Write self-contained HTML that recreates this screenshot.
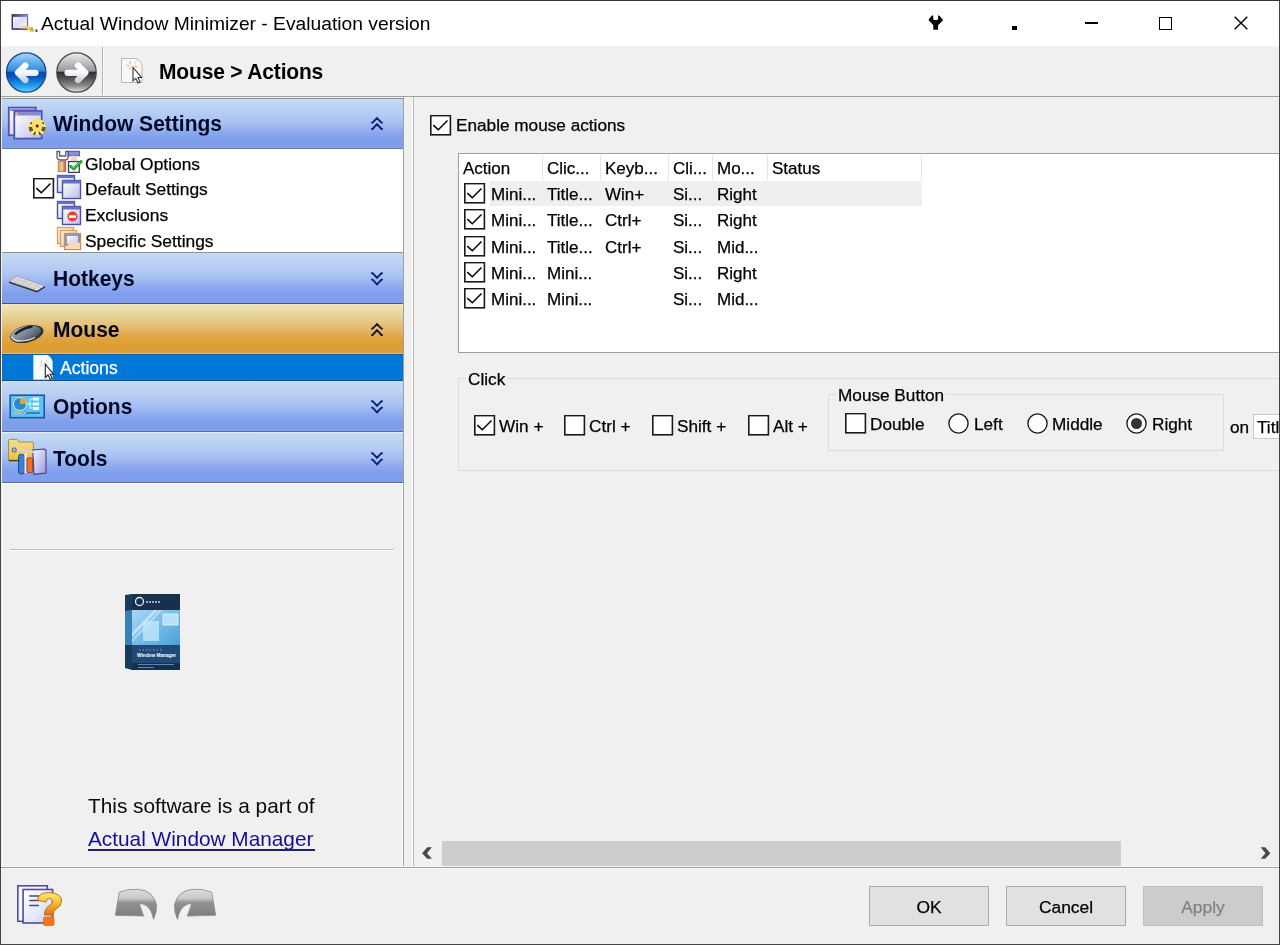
<!DOCTYPE html>
<html><head><meta charset="utf-8">
<style>
*{margin:0;padding:0;box-sizing:border-box}
html,body{width:1280px;height:945px;overflow:hidden;background:#f0f0f0}
body{position:relative;font-family:"Liberation Sans",sans-serif;color:#000;-webkit-font-smoothing:antialiased}
.t,.ht,.btn{will-change:transform}
.lv,.lb,.it,.btn{-webkit-text-stroke:0.25px currentColor}
.a{position:absolute}
.t{position:absolute;white-space:nowrap;line-height:1}

.hdr{position:absolute;left:2px;width:401px;background:linear-gradient(#c6dcf2 0%,#b6cef4 28%,#a8c0f2 48%,#8ca8ee 68%,#7e9eec 82%,#7e9eee 100%)}
.hdr.or{background:linear-gradient(#efe8c0 0%,#e8d49c 22%,#e6c07a 42%,#e0a848 66%,#dc9c30 86%,#dca040 100%)}
.ht{position:absolute;left:52.5px;font-size:21px;transform:scaleY(1.08);transform-origin:0 17.8px;font-weight:bold;color:#000a28;white-space:nowrap;line-height:1}
.chev{position:absolute;left:370px;width:14px;height:14px}
.it{font-size:17.4px}

.cb{position:absolute;width:20px;height:20px;border:1.6px solid #333;background:#fff}
.cb.chk::after{content:"";position:absolute;left:3px;top:3px;width:11px;height:6px;border-left:1.6px solid #222;border-bottom:1.6px solid #222;transform:translate(0px,1.5px) rotate(-45deg) scaleX(1.15);transform-origin:center}
.rb{position:absolute;width:21px;height:21px;border:1.6px solid #333;border-radius:50%;background:#fff}
.rb.on::after{content:"";position:absolute;left:3.4px;top:3.4px;width:11px;height:11px;border-radius:50%;background:#333}
.lb{font-size:17.2px}
.lv{font-size:17px}
.btn{position:absolute;top:886px;width:120px;height:40px;background:#e1e1e1;border:1px solid #adadad;font-size:17.4px;text-align:center;line-height:40px}
.btn.dis{background:#cccccc;border-color:#bfbfbf;color:#838383}
</style></head><body>

<!-- window border -->


<!-- title bar -->
<div class="a" style="left:1px;top:1px;width:1278px;height:45px;background:#fff"></div>
<div class="t" style="left:40.5px;top:14.1px;font-size:19.25px;color:#000">Actual Window Minimizer - Evaluation version</div>


<!-- title bar icons -->
<svg class="a" style="left:924px;top:10px" width="24" height="24" viewBox="0 0 24 24"><path d="M8.3 5.3 Q6.5 7.2 4.6 9.6 Q4.6 10.6 5.6 11.3 L8.8 14.4 L9.3 15.2 L9.3 19.7 L14.1 19.7 L14.1 15.2 L15 14.2 L18.1 11.2 Q19 10.4 18.9 9.7 Q17 7.3 14.8 5.3 L14.1 5.8 L14.1 9.6 Q11.7 10.6 9.2 9.6 L9.2 5.8 Z" fill="#000"/></svg>
<div class="a" style="left:1012px;top:26px;width:5px;height:4px;background:#000"></div>
<div class="a" style="left:1085px;top:22px;width:13px;height:1.6px;background:#000"></div>
<div class="a" style="left:1159px;top:17px;width:13px;height:12.5px;border:1.5px solid #000"></div>
<svg class="a" style="left:1234px;top:15.8px" width="14" height="14" viewBox="0 0 14 14"><path d="M0.7 0.7 L13.3 13.3 M13.3 0.7 L0.7 13.3" stroke="#000" stroke-width="1.4"/></svg>
<!-- app icon -->
<svg class="a" style="left:11px;top:13px" width="28" height="20" viewBox="0 0 28 20">
<defs><linearGradient id="wg" x1="0" y1="0" x2="1" y2="1"><stop offset="0" stop-color="#ffffff"/><stop offset="0.45" stop-color="#dcdcf8"/><stop offset="1" stop-color="#f4f4ff"/></linearGradient>
<linearGradient id="ag" x1="0" y1="0" x2="1" y2="0"><stop offset="0" stop-color="#fae890"/><stop offset="0.6" stop-color="#f0cc50"/><stop offset="1" stop-color="#c89010"/></linearGradient>
<linearGradient id="tg" x1="0" y1="0" x2="1" y2="0"><stop offset="0" stop-color="#3a3a80"/><stop offset="1" stop-color="#9090c0"/></linearGradient></defs>
<rect x="1.4" y="1.5" width="15.2" height="14.4" fill="url(#wg)" stroke="#5a5a90" stroke-width="1"/>
<path d="M1.2 1.2 L1.2 16.2 L16.8 16.2" fill="none" stroke="#30306a" stroke-width="1.2"/>
<rect x="1.5" y="1.5" width="15" height="2.4" fill="url(#tg)"/>
<path d="M9 13.8 Q15 11.2 20 14.8 L21.2 13.6 L23 18.5 L18 18.5 L19.2 17.2 Q14.5 14.6 9.5 15.6 Z" fill="url(#ag)"/>
<rect x="24.4" y="16.4" width="2" height="2.6" fill="#4a4a60"/>
</svg>
<!-- toolbar -->

<!-- nav buttons -->
<svg class="a" style="left:5px;top:51px" width="44" height="44" viewBox="0 0 44 44">
<defs>
<linearGradient id="bb" x1="0" y1="0" x2="0" y2="1"><stop offset="0" stop-color="#a8d8fa"/><stop offset="0.2" stop-color="#70b4f0"/><stop offset="0.46" stop-color="#3488e0"/><stop offset="0.5" stop-color="#0848a8"/><stop offset="0.62" stop-color="#0a58c0"/><stop offset="0.85" stop-color="#22a0f0"/><stop offset="1" stop-color="#60dcff"/></linearGradient>
<linearGradient id="gb" x1="0" y1="0" x2="0" y2="1"><stop offset="0" stop-color="#f0f0f0"/><stop offset="0.2" stop-color="#c8c8c8"/><stop offset="0.46" stop-color="#9a9a9a"/><stop offset="0.5" stop-color="#303030"/><stop offset="0.62" stop-color="#4a4a4a"/><stop offset="0.85" stop-color="#909090"/><stop offset="1" stop-color="#e8e8e8"/></linearGradient>
<linearGradient id="aw" x1="0" y1="0" x2="0" y2="1"><stop offset="0" stop-color="#ffffff"/><stop offset="0.5" stop-color="#f4f8fc"/><stop offset="1" stop-color="#c8d4e0"/></linearGradient>
</defs>
<circle cx="21.2" cy="21.5" r="19.7" fill="url(#bb)" stroke="#1a4888" stroke-width="1.3"/>
<path d="M30.5 21.8 L14 21.8 M20.3 14.6 L13 21.8 L20.3 29" fill="none" stroke="url(#aw)" stroke-width="6.3" stroke-linecap="round" stroke-linejoin="round"/>
</svg>
<svg class="a" style="left:55px;top:51px" width="44" height="44" viewBox="0 0 44 44">
<circle cx="21.5" cy="21.5" r="19.7" fill="url(#gb)" stroke="#4a4a4a" stroke-width="1.3"/>
<path d="M12.6 21.8 L29.5 21.8 M23 14.6 L30.3 21.8 L23 29" fill="none" stroke="url(#aw)" stroke-width="6.3" stroke-linecap="round" stroke-linejoin="round"/>
</svg>
<!-- breadcrumb doc icon -->
<svg class="a" style="left:120px;top:57px" width="26" height="28" viewBox="0 0 26 28">
<path d="M1.5 1.5 L16 1.5 Q22 4 22 9.5 L22 25.5 L1.5 25.5 Z" fill="#f8f8f8" stroke="#b0b0b0" stroke-width="0.9"/>
<path d="M10 4 L10 7.5 M11.5 10.5 L8.5 12 M14.5 6 L16.5 4.2 M14 9 L17.5 10 M6.5 8 L9.5 9" stroke="#f0a070" stroke-width="0.9"/>
<path d="M13 10.5 L13 23.8 L15.8 21.3 L18 26 L20 25 L18 20.5 L21.5 20.5 Z" fill="#fff" stroke="#333" stroke-width="1.1"/>
</svg>
<div class="a" style="left:1px;top:96px;width:1278px;height:1px;background:#a0a0a0"></div>
<div class="a" style="left:102px;top:47px;width:1px;height:48px;background:#b4b4b4"></div><div class="a" style="left:103px;top:47px;width:1px;height:48px;background:#fafafa"></div>
<div class="t" style="left:159px;top:61.1px;font-size:21px;font-weight:bold;letter-spacing:-0.17px;transform:scaleY(1.07);transform-origin:0 17.8px">Mouse &gt; Actions</div>


<!-- LEFT PANEL -->
<div class="a" style="left:1px;top:97px;width:403px;height:770px;background:#f0f0f0"></div>
<div class="a" style="left:402px;top:97px;width:1px;height:770px;background:#fff"></div>
<div class="a" style="left:403px;top:97px;width:1px;height:770px;background:#a0a0a0"></div>

<!-- headers -->

<div class="hdr" style="top:98px;height:51px;box-shadow:inset 0 1px 0 #8a929c,inset 0 -1px 0 #6c7aa8"></div>
<div class="ht" style="top:113.3px">Window Settings</div><svg class="chev" style="top:116px" viewBox="0 0 14 14"><path d="M1.2 6.6 L2.6 6.6 L7 2 L11.4 6.6 L12.8 6.6 M1.2 13 L2.6 13 L7 8.2 L11.4 13 L12.8 13" fill="none" stroke="#0a1e78" stroke-width="1.85" stroke-linejoin="miter"/></svg>
<div class="hdr" style="top:252px;height:52px;box-shadow:inset 0 1px 0 #8a929c,inset 0 -1px 0 #4a5470"></div>
<div class="ht" style="top:267.5px">Hotkeys</div><svg class="chev" style="top:272px" viewBox="0 0 14 14"><path d="M1.2 1.2 L2.6 1.2 L7 5.8 L11.4 1.2 L12.8 1.2 M1.2 7.6 L2.6 7.6 L7 12.4 L11.4 7.6 L12.8 7.6" fill="none" stroke="#0a1e78" stroke-width="1.85" stroke-linejoin="miter"/></svg>
<div class="hdr or" style="top:304px;height:49px"></div>
<div class="a" style="left:2px;top:353px;width:401px;height:1px;background:#c8c0a0"></div>
<div class="ht" style="top:319px">Mouse</div><svg class="chev" style="top:322px" viewBox="0 0 14 14"><path d="M1.2 6.6 L2.6 6.6 L7 2 L11.4 6.6 L12.8 6.6 M1.2 13 L2.6 13 L7 8.2 L11.4 13 L12.8 13" fill="none" stroke="#101838" stroke-width="1.85" stroke-linejoin="miter"/></svg>
<div class="hdr" style="top:381px;height:51px;box-shadow:inset 0 -1px 0 #5c6a98"></div>
<div class="ht" style="top:396.3px">Options</div><svg class="chev" style="top:400px" viewBox="0 0 14 14"><path d="M1.2 1.2 L2.6 1.2 L7 5.8 L11.4 1.2 L12.8 1.2 M1.2 7.6 L2.6 7.6 L7 12.4 L11.4 7.6 L12.8 7.6" fill="none" stroke="#0a1e78" stroke-width="1.85" stroke-linejoin="miter"/></svg>
<div class="hdr" style="top:432px;height:51px;box-shadow:inset 0 1px 0 #e0f0ff,inset 0 -1px 0 #5c6a98"></div>
<div class="ht" style="top:447.6px">Tools</div><svg class="chev" style="top:452px" viewBox="0 0 14 14"><path d="M1.2 1.2 L2.6 1.2 L7 5.8 L11.4 1.2 L12.8 1.2 M1.2 7.6 L2.6 7.6 L7 12.4 L11.4 7.6 L12.8 7.6" fill="none" stroke="#0a1e78" stroke-width="1.85" stroke-linejoin="miter"/></svg>
<div class="a" style="left:2px;top:483px;width:401px;height:1px;background:#fff"></div>
<div class="a" style="left:2px;top:149px;width:401px;height:103px;background:#fff"></div>
<div class="t it" style="left:85px;top:155.8px">Global Options</div>
<div class="t it" style="left:85px;top:181px">Default Settings</div>
<div class="t it" style="left:85px;top:207px">Exclusions</div>
<div class="t it" style="left:85px;top:233px">Specific Settings</div>

<div class="a" style="left:2px;top:354px;width:401px;height:27px;background:#0078d7;box-shadow:inset 0 1px 0 #1a5a90,inset 0 -1px 0 #1a5080"></div>
<div class="t it" style="left:60px;top:359.8px;color:#fff;font-size:17.6px">Actions</div>


<svg width="0" height="0" style="position:absolute"><defs>
<linearGradient id="wf" x1="0" y1="0" x2="1" y2="1"><stop offset="0" stop-color="#ffffff"/><stop offset="0.5" stop-color="#dfe2f6"/><stop offset="1" stop-color="#b4bce8"/></linearGradient>
<linearGradient id="of" x1="0" y1="0" x2="1" y2="1"><stop offset="0" stop-color="#fff6e8"/><stop offset="0.5" stop-color="#f6dcb4"/><stop offset="1" stop-color="#e8b878"/></linearGradient>
<radialGradient id="gear" cx="0.45" cy="0.4" r="0.6"><stop offset="0" stop-color="#fff2a0"/><stop offset="0.6" stop-color="#f0c830"/><stop offset="1" stop-color="#c08a10"/></radialGradient>
</defs></svg>
<!-- WS header icon -->
<svg class="a" style="left:7px;top:105px" width="42" height="36" viewBox="0 0 42 36">
<rect x="1.8" y="2.6" width="27" height="27.6" fill="url(#wf)" stroke="#5450b4" stroke-width="1.8"/>
<rect x="2.5" y="3.5" width="25.5" height="2.5" fill="#9090d8"/>
<rect x="7.3" y="6" width="27.4" height="27.6" fill="url(#wf)" stroke="#5450b4" stroke-width="1.8"/>
<rect x="8" y="7" width="26" height="3.5" fill="#8a8ad0"/>
<circle cx="9.8" cy="8.7" r="1.2" fill="#f0b890"/>
<g transform="translate(30.2,22)">
<circle r="8.6" fill="#f8e070"/>
<path d="M-8.6 0 A8.6 8.6 0 0 0 8.6 0 L5 0 A5 5 0 0 1 -5 0 Z" fill="#5a3a08" opacity="0.85"/>
<path d="M-2 8.6 L-1 4 L1 4 L2 8.6 Z M-7 5 L-3.2 3 L-2 4.6 L-5 7.5 Z M7 5 L3.2 3 L2 4.6 L5 7.5 Z" fill="#fff0a0"/>
<path d="M-1.8 -1 L0 -3 L1.8 -1 L0 1 Z" fill="#4a2a08"/>
<circle cx="-6" cy="-3.8" r="0.9" fill="#4a2a08"/><circle cx="6" cy="-3.8" r="0.9" fill="#4a2a08"/>
</g>
</svg>
<svg class="a" style="left:33px;top:178px" width="22" height="22" viewBox="0 0 22 22"><rect x="0.8" y="0.6" width="19.6" height="19.2" fill="#fff" stroke="#1a1a1a" stroke-width="1.6"/><path d="M3.3 10.1 L8.3 14.7 L17.5 5.4" fill="none" stroke="#000" stroke-width="1.45"/></svg>
<!-- tree icons -->
<svg class="a" style="left:56px;top:150px" width="27" height="24" viewBox="0 0 27 24">
<defs><linearGradient id="goh" x1="0" y1="0" x2="1" y2="0"><stop offset="0" stop-color="#e8a050"/><stop offset="0.5" stop-color="#f8c890"/><stop offset="1" stop-color="#c05010"/></linearGradient></defs>
<path d="M1 1.5 L1 7 Q1 10 5 10 L8.5 10 Q12.2 10 12.2 7 L12.2 1.5 L9.8 1.5 L9.8 6 L3.6 6 L3.6 1.5 Z" fill="#fafaff" stroke="#5a5870" stroke-width="1.3"/>
<rect x="2.2" y="11.2" width="7.6" height="10.5" fill="url(#goh)" stroke="#8a7060" stroke-width="0.7"/>
<rect x="12.3" y="1.2" width="11.3" height="4.6" fill="#8a90e0" stroke="#4a4a90" stroke-width="0.9"/>
<rect x="14.8" y="5.8" width="6.2" height="5.2" fill="#f0d8b8"/>
<rect x="12.5" y="11.6" width="10.8" height="10.8" fill="#fff" stroke="#3a3a70" stroke-width="1.3"/>
<path d="M14.8 16.3 L17.8 18.8 L25 11.6" fill="none" stroke="#1a9a2a" stroke-width="3" stroke-linecap="round"/>
<path d="M15.2 16.3 L17.8 18.2 L24.6 11.8" fill="none" stroke="#70e070" stroke-width="1"/>
</svg>
<svg class="a" style="left:56px;top:174px" width="27" height="26" viewBox="0 0 27 26">
<rect x="1.5" y="1.5" width="17" height="17" fill="url(#wf)" stroke="#4a50a8" stroke-width="1.4"/>
<rect x="1.5" y="1.5" width="17" height="2.5" fill="#6870c0"/>
<rect x="6.5" y="6.5" width="18" height="18" fill="url(#wf)" stroke="#4a50a8" stroke-width="1.4"/>
<rect x="6.5" y="6.5" width="18" height="3" fill="#6870c0"/>
</svg>
<svg class="a" style="left:56px;top:200px" width="27" height="26" viewBox="0 0 27 26">
<rect x="1.5" y="1.5" width="17" height="17" fill="url(#wf)" stroke="#4a50a8" stroke-width="1.4"/>
<rect x="1.5" y="1.5" width="17" height="2.5" fill="#6870c0"/>
<rect x="6.5" y="6.5" width="18" height="18" fill="url(#wf)" stroke="#4a50a8" stroke-width="1.4"/>
<rect x="6.5" y="6.5" width="18" height="3" fill="#6870c0"/>
<circle cx="16.5" cy="16.5" r="5" fill="#e84030"/>
<rect x="13" y="15.3" width="7" height="2.6" fill="#fff"/>
</svg>
<svg class="a" style="left:56px;top:226px" width="27" height="25" viewBox="0 0 27 25">
<rect x="1.5" y="1.5" width="16" height="16" fill="url(#of)" stroke="#d8a060" stroke-width="1.3"/>
<rect x="4.5" y="4.5" width="16" height="16" fill="url(#of)" stroke="#d8a060" stroke-width="1.3"/>
<rect x="8.5" y="7.5" width="16" height="16" fill="url(#of)" stroke="#c89050" stroke-width="1.3"/>
<rect x="10" y="9" width="13" height="10" fill="url(#wf)" stroke="#5058a8" stroke-width="1.1"/>
<path d="M9 23 Q15 13 24 17 L24 23 Z" fill="#f6dcb0"/>
</svg>
<!-- hotkeys keyboard -->
<svg class="a" style="left:7px;top:273px" width="40" height="20" viewBox="0 0 40 20">
<path d="M2 8.5 L10 3 L38 13 L30 18 Z" fill="#dcdcdc" stroke="#9a9a9a" stroke-width="0.8"/>
<path d="M2 8.5 L2 10 L30 19.5 L38 14.5 L38 13 L30 18 Z" fill="#2a3040"/>
<path d="M8 5.5 L33 14.5 M5 7.5 L30 16.5 M14 5 L8 9.5 M20 7 L14 11.5 M26 9.2 L20 13.8 M32 11.4 L26 16" stroke="#b8b8b8" stroke-width="0.6"/>
</svg>
<!-- mouse icon -->
<svg class="a" style="left:8px;top:322px" width="40" height="24" viewBox="0 0 40 24">
<defs><linearGradient id="mg" x1="0" y1="0" x2="1" y2="1"><stop offset="0" stop-color="#a8b4c0"/><stop offset="0.5" stop-color="#7a8896"/><stop offset="1" stop-color="#3a4048"/></linearGradient></defs>
<ellipse cx="18.8" cy="12" rx="17" ry="8.4" transform="rotate(-13 18.8 12)" fill="#2e3236"/>
<ellipse cx="17.8" cy="11.4" rx="15.4" ry="7" transform="rotate(-13 17.8 11.4)" fill="url(#mg)"/>
<path d="M3.5 14.5 Q5 19 12 19 Q20 19 27 15.5" fill="none" stroke="#e0e4e8" stroke-width="1.3"/>
<path d="M7.8 11.8 Q14 6.5 23.5 4.8" fill="none" stroke="#1a1e22" stroke-width="2.4" stroke-linecap="round"/>
</svg>
<!-- actions doc icon -->
<svg class="a" style="left:33px;top:355px" width="22" height="26" viewBox="0 0 22 26">
<path d="M0.5 0 L14.5 0 Q19.5 3 19.5 8 L19.5 24.5 L0.5 24.5 Z" fill="#f6fafc" stroke="#d0d8e0" stroke-width="0.6"/>
<path d="M8.5 5 L8.5 8 M9.5 9.5 L7 11 M13 6 L15 4.5 M12.5 8.5 L15.5 9.5 M6.5 7.5 L9 8.5" stroke="#f4c8a8" stroke-width="0.9"/>
<path d="M12.3 9.2 L12.3 22.5 L15 20 L17.3 24.5 L19.2 23.5 L17.2 19.2 L20.5 19.2 Z" fill="#fff" stroke="#222" stroke-width="1.1"/>
</svg>
<!-- options icon -->
<svg class="a" style="left:9px;top:394px" width="37" height="25" viewBox="0 0 37 25">
<rect x="1.2" y="1.2" width="34" height="22.5" fill="#60c4f0" stroke="#1a58a8" stroke-width="1.6"/>
<circle cx="11" cy="10" r="6.5" fill="#2a8ad0" stroke="#e8f8ff" stroke-width="0.8"/>
<path d="M11 10 L11 3.5 A6.5 6.5 0 0 1 17.5 10 Z" fill="#f0a020"/>
<path d="M17.5 10 L21 10 L21 5 L24 5 M21 10 L24 10 M21 10 L21 14 L24 14" fill="none" stroke="#e8f8ff" stroke-width="0.9"/>
<rect x="24" y="3.5" width="6" height="3" fill="#e8f8ff"/><rect x="24" y="8.5" width="6" height="3" fill="#e8f8ff"/><rect x="24" y="13" width="6" height="3" fill="#e8f8ff"/>
<path d="M5 19 L15 19" stroke="#f0c040" stroke-width="1.2"/><path d="M15 19 L31 19" stroke="#1a58a8" stroke-width="1.2"/><circle cx="16" cy="19" r="1.3" fill="#fff" stroke="#1a58a8" stroke-width="0.6"/>
</svg>
<!-- tools icon -->
<svg class="a" style="left:7px;top:438px" width="40" height="38" viewBox="0 0 40 38">
<defs><linearGradient id="tf" x1="0" y1="0" x2="0" y2="1"><stop offset="0" stop-color="#f4e088"/><stop offset="1" stop-color="#e8c048"/></linearGradient>
<linearGradient id="tb" x1="0" y1="0" x2="1" y2="1"><stop offset="0" stop-color="#f0f0ff"/><stop offset="0.5" stop-color="#c8c8f0"/><stop offset="1" stop-color="#9898d8"/></linearGradient></defs>
<path d="M1.5 2.5 Q1.5 1.4 3 1.4 L10 1.4 L12 4 L25 4 Q26.5 4 26.5 6 L26.5 23 L1.5 23 Z" fill="url(#tf)" stroke="#a08830" stroke-width="0.9"/>
<path d="M2 22.5 L26 22.5" stroke="#403820" stroke-width="1.2"/>
<path d="M25.7 12 L37 11 Q39 11 39 13 L39 35 L27 36.4 Z" fill="url(#tb)" stroke="#40408a" stroke-width="1.1"/>
<path d="M6 12.5 Q4 9.5 7 9 Q10 8.5 10.5 12 L27 14" fill="none" stroke="#d8d8e0" stroke-width="2.2"/>
<circle cx="7.2" cy="12" r="2.2" fill="#b0b0b8" stroke="#505060" stroke-width="0.8"/>
<rect x="11.6" y="16.4" width="5.8" height="19.5" rx="2" fill="#3a80d0" stroke="#1a3a80" stroke-width="0.9"/>
<rect x="17.4" y="15" width="2.5" height="20" fill="#e8e8f8"/>
<rect x="19.9" y="19.9" width="5.8" height="14.5" rx="1" fill="#f07030" stroke="#903010" stroke-width="0.8"/>
</svg>
<div class="a" style="left:10px;top:549px;width:384px;height:1px;background:#bcbcbc"></div><div class="a" style="left:10px;top:550px;width:384px;height:1px;background:#fff"></div><div class="a" style="left:2px;top:484px;width:1px;height:383px;background:#fff"></div>

<div class="t" style="left:88px;top:796.2px;font-size:20.8px;color:#0a0a0a">This software is a part of</div>
<div class="t" style="left:88px;top:829px;font-size:20.8px;color:#10109a">Actual Window Manager</div><div class="a" style="left:88px;top:849px;width:227px;height:2px;background:#202070"></div>
<!-- product box -->
<svg class="a" style="left:124px;top:593px" width="57" height="78" viewBox="0 0 57 78">
<defs><linearGradient id="pbm" x1="0" y1="0" x2="1" y2="1"><stop offset="0" stop-color="#a8d8f4"/><stop offset="0.5" stop-color="#78bce8"/><stop offset="1" stop-color="#4aa0d8"/></linearGradient></defs>
<path d="M1 2 L8 1 L8 77 L1 75 Z" fill="#1a3a5a"/>
<path d="M1 18 L8 17 L8 52 L1 52 Z" fill="#3a80b8"/>
<rect x="8" y="1" width="48" height="76" fill="#17304c"/>
<rect x="8" y="17" width="48" height="35" fill="url(#pbm)"/>
<path d="M8 40 L30 17 L34 17 L8 44 Z M8 47 L36 17 L38 17 L8 49 Z" fill="#d8f0ff" opacity="0.7"/>
<rect x="39" y="21" width="15" height="11" fill="#b8e0f8" stroke="#e8f8ff" stroke-width="0.8"/>
<rect x="19" y="28" width="16" height="20" fill="#c8e8fc" opacity="0.75"/>
<rect x="8" y="52" width="48" height="25" fill="#1f4a78"/>
<rect x="8" y="70" width="48" height="7" fill="#15304e"/>
<circle cx="15.5" cy="8.5" r="4" fill="none" stroke="#e0f0ff" stroke-width="1.3"/>
<path d="M22 9 L36 9" stroke="#c0d8f0" stroke-width="1.6" stroke-dasharray="2 1"/>
<path d="M15 57 L38 57" stroke="#a8c8e8" stroke-width="0.8" stroke-dasharray="1.5 2"/>
<text x="13" y="64" font-family="Liberation Sans" font-size="5.6" font-weight="bold" fill="#ffffff" textLength="39" lengthAdjust="spacingAndGlyphs">Window Manager</text>
<path d="M14 71.5 L50 71.5 M14 74.5 L30 74.5" stroke="#8aa8c8" stroke-width="0.7"/>
</svg>
<!-- help icon -->
<svg class="a" style="left:16px;top:883px" width="48" height="44" viewBox="0 0 48 44">
<defs><linearGradient id="hq" x1="0" y1="0" x2="0" y2="1"><stop offset="0" stop-color="#ffe880"/><stop offset="0.45" stop-color="#f8c030"/><stop offset="0.75" stop-color="#f09020"/><stop offset="1" stop-color="#e87010"/></linearGradient>
<linearGradient id="hd" x1="0" y1="0" x2="1" y2="1"><stop offset="0" stop-color="#ffffff"/><stop offset="0.6" stop-color="#e4e8fa"/><stop offset="1" stop-color="#c0c8f0"/></linearGradient></defs>
<rect x="1.8" y="2.8" width="29.5" height="35.5" fill="#f4f4ff" stroke="#50508a" stroke-width="1.6"/>
<rect x="7.1" y="6.5" width="29.5" height="33.5" fill="url(#hd)" stroke="#50508a" stroke-width="1.6"/>
<path d="M13.2 12.9 L23 12.9 M13.2 17.6 L23 17.6 M13.2 22.4 L23 22.4" stroke="#4a4e70" stroke-width="1.5"/>
<path d="M21.5 17.5 Q22 9.6 33 9.6 Q45.5 10 45.6 18 Q45.5 23 40 26 Q37 28 37 32 L28.5 32 Q28.5 25.5 33.5 22.5 Q37 20.5 36.5 18 Q36 15.5 33 15.5 Q30.5 15.5 30 19 Z" fill="url(#hq)" stroke="#b86810" stroke-width="0.9"/>
<rect x="27.5" y="34" width="10.5" height="8.5" rx="1.2" fill="#f07818" stroke="#d86010" stroke-width="0.6"/>
</svg>
<!-- undo / redo -->
<svg class="a" style="left:112px;top:887px" width="48" height="34" viewBox="0 0 48 34">
<defs><linearGradient id="ur" x1="0" y1="0" x2="0" y2="1"><stop offset="0" stop-color="#dcdcdc"/><stop offset="0.3" stop-color="#cacaca"/><stop offset="0.45" stop-color="#909090"/><stop offset="1" stop-color="#7c7c7c"/></linearGradient></defs>
<path id="undo" d="M7.3 5.1 Q16 1.5 26.5 2.3 Q41 3.5 44.5 17.5 Q45 25 41.5 32.4 Q39.5 22 34 18.5 Q30 16 27.3 16.8 L31.7 29.1 L3.3 28.3 Z" fill="url(#ur)" stroke="#8c8c8c" stroke-width="0.8"/>
</svg>
<svg class="a" style="left:171px;top:887px" width="48" height="34" viewBox="0 0 48 34">
<g transform="translate(48,0) scale(-1,1)"><path d="M7.3 5.1 Q16 1.5 26.5 2.3 Q41 3.5 44.5 17.5 Q45 25 41.5 32.4 Q39.5 22 34 18.5 Q30 16 27.3 16.8 L31.7 29.1 L3.3 28.3 Z" fill="url(#ur)" stroke="#8c8c8c" stroke-width="0.8"/></g>
</svg>


<div class="a" style="left:403px;top:97px;width:1px;height:770px;background:#a0a0a0"></div>
<div class="a" style="left:412px;top:97px;width:1px;height:770px;background:#fafafa"></div><div class="a" style="left:413px;top:97px;width:1px;height:770px;background:#b8b8b8"></div>


<!-- RIGHT PANEL -->
<svg class="a" style="left:430px;top:115px" width="22" height="22" viewBox="0 0 22 22"><rect x="0.8" y="0.6" width="19.6" height="19.2" fill="#fff" stroke="#1a1a1a" stroke-width="1.6"/><path d="M3.3 10.1 L8.3 14.7 L17.5 5.4" fill="none" stroke="#000" stroke-width="1.45"/></svg>
<div class="t lb" style="left:456px;top:117px">Enable mouse actions</div>

<!-- listview -->
<div class="a" style="left:458px;top:153px;width:830px;height:200px;background:#fff;border:1px solid #a0a0a0"></div>
<div class="a" style="left:542px;top:155px;width:1px;height:25px;background:#e5e5e5"></div>
<div class="a" style="left:600px;top:155px;width:1px;height:25px;background:#e5e5e5"></div>
<div class="a" style="left:668px;top:155px;width:1px;height:25px;background:#e5e5e5"></div>
<div class="a" style="left:712px;top:155px;width:1px;height:25px;background:#e5e5e5"></div>
<div class="a" style="left:767px;top:155px;width:1px;height:25px;background:#e5e5e5"></div>
<div class="a" style="left:921px;top:155px;width:1px;height:25px;background:#e5e5e5"></div>
<div class="t lv" style="left:463px;top:160px">Action</div>
<div class="t lv" style="left:547px;top:160px">Clic...</div>
<div class="t lv" style="left:605px;top:160px">Keyb...</div>
<div class="t lv" style="left:673px;top:160px">Cli...</div>
<div class="t lv" style="left:717px;top:160px">Mo...</div>
<div class="t lv" style="left:772px;top:160px">Status</div>
<div class="a" style="left:490px;top:181px;width:432px;height:25px;background:#efefef"></div>
<svg class="a" style="left:464px;top:183px" width="22" height="22" viewBox="0 0 22 22"><rect x="0.8" y="0.6" width="19.6" height="19.2" fill="#fff" stroke="#1a1a1a" stroke-width="1.6"/><path d="M3.3 10.1 L8.3 14.7 L17.5 5.4" fill="none" stroke="#000" stroke-width="1.45"/></svg>
<div class="t lv" style="left:491px;top:186px">Mini...</div>
<div class="t lv" style="left:547px;top:186px">Title...</div>
<div class="t lv" style="left:605px;top:186px">Win+</div>
<div class="t lv" style="left:673px;top:186px">Si...</div>
<div class="t lv" style="left:717px;top:186px">Right</div>
<svg class="a" style="left:464px;top:209px" width="22" height="22" viewBox="0 0 22 22"><rect x="0.8" y="0.6" width="19.6" height="19.2" fill="#fff" stroke="#1a1a1a" stroke-width="1.6"/><path d="M3.3 10.1 L8.3 14.7 L17.5 5.4" fill="none" stroke="#000" stroke-width="1.45"/></svg>
<div class="t lv" style="left:491px;top:212px">Mini...</div>
<div class="t lv" style="left:547px;top:212px">Title...</div>
<div class="t lv" style="left:605px;top:212px">Ctrl+</div>
<div class="t lv" style="left:673px;top:212px">Si...</div>
<div class="t lv" style="left:717px;top:212px">Right</div>
<svg class="a" style="left:464px;top:236px" width="22" height="22" viewBox="0 0 22 22"><rect x="0.8" y="0.6" width="19.6" height="19.2" fill="#fff" stroke="#1a1a1a" stroke-width="1.6"/><path d="M3.3 10.1 L8.3 14.7 L17.5 5.4" fill="none" stroke="#000" stroke-width="1.45"/></svg>
<div class="t lv" style="left:491px;top:239px">Mini...</div>
<div class="t lv" style="left:547px;top:239px">Title...</div>
<div class="t lv" style="left:605px;top:239px">Ctrl+</div>
<div class="t lv" style="left:673px;top:239px">Si...</div>
<div class="t lv" style="left:717px;top:239px">Mid...</div>
<svg class="a" style="left:464px;top:262px" width="22" height="22" viewBox="0 0 22 22"><rect x="0.8" y="0.6" width="19.6" height="19.2" fill="#fff" stroke="#1a1a1a" stroke-width="1.6"/><path d="M3.3 10.1 L8.3 14.7 L17.5 5.4" fill="none" stroke="#000" stroke-width="1.45"/></svg>
<div class="t lv" style="left:491px;top:265px">Mini...</div>
<div class="t lv" style="left:547px;top:265px">Mini...</div>
<div class="t lv" style="left:673px;top:265px">Si...</div>
<div class="t lv" style="left:717px;top:265px">Right</div>
<svg class="a" style="left:464px;top:288px" width="22" height="22" viewBox="0 0 22 22"><rect x="0.8" y="0.6" width="19.6" height="19.2" fill="#fff" stroke="#1a1a1a" stroke-width="1.6"/><path d="M3.3 10.1 L8.3 14.7 L17.5 5.4" fill="none" stroke="#000" stroke-width="1.45"/></svg>
<div class="t lv" style="left:491px;top:291px">Mini...</div>
<div class="t lv" style="left:547px;top:291px">Mini...</div>
<div class="t lv" style="left:673px;top:291px">Si...</div>
<div class="t lv" style="left:717px;top:291px">Mid...</div>

<!-- Click group -->
<div class="a" style="left:458px;top:378px;width:830px;height:93px;border:1px solid #dcdcdc"></div>
<div class="t lb" style="left:466px;top:371px;padding:0 2px;background:#f0f0f0">Click</div>
<svg class="a" style="left:474px;top:415px" width="22" height="22" viewBox="0 0 22 22"><rect x="0.8" y="0.6" width="19.6" height="19.2" fill="#fff" stroke="#1a1a1a" stroke-width="1.6"/><path d="M3.3 10.1 L8.3 14.7 L17.5 5.4" fill="none" stroke="#000" stroke-width="1.45"/></svg><div class="t lb" style="left:499px;top:418px">Win +</div>
<svg class="a" style="left:564px;top:415px" width="22" height="22" viewBox="0 0 22 22"><rect x="0.8" y="0.6" width="19.6" height="19.2" fill="#fff" stroke="#1a1a1a" stroke-width="1.6"/></svg><div class="t lb" style="left:589px;top:418px">Ctrl +</div>
<svg class="a" style="left:652px;top:415px" width="22" height="22" viewBox="0 0 22 22"><rect x="0.8" y="0.6" width="19.6" height="19.2" fill="#fff" stroke="#1a1a1a" stroke-width="1.6"/></svg><div class="t lb" style="left:677px;top:418px">Shift +</div>
<svg class="a" style="left:748px;top:415px" width="22" height="22" viewBox="0 0 22 22"><rect x="0.8" y="0.6" width="19.6" height="19.2" fill="#fff" stroke="#1a1a1a" stroke-width="1.6"/></svg><div class="t lb" style="left:773px;top:418px">Alt +</div>

<div class="a" style="left:828px;top:394px;width:396px;height:57px;border:1px solid #dcdcdc"></div>
<div class="t lb" style="left:836px;top:387px;padding:0 2px;background:#f0f0f0">Mouse Button</div>
<svg class="a" style="left:845px;top:413px" width="22" height="22" viewBox="0 0 22 22"><rect x="0.8" y="0.6" width="19.6" height="19.2" fill="#fff" stroke="#1a1a1a" stroke-width="1.6"/></svg><div class="t lb" style="left:870px;top:416px">Double</div>
<svg class="a" style="left:948.4px;top:413.0px" width="22" height="22" viewBox="0 0 22 22"><circle cx="10.5" cy="10.5" r="9.6" fill="#fff" stroke="#1a1a1a" stroke-width="1.35"/></svg><div class="t lb" style="left:974px;top:416px">Left</div>
<svg class="a" style="left:1026.9px;top:413.0px" width="22" height="22" viewBox="0 0 22 22"><circle cx="10.5" cy="10.5" r="9.6" fill="#fff" stroke="#1a1a1a" stroke-width="1.35"/></svg><div class="t lb" style="left:1052px;top:416px">Middle</div>
<svg class="a" style="left:1126.3px;top:413.0px" width="22" height="22" viewBox="0 0 22 22"><circle cx="10.5" cy="10.5" r="9.6" fill="#fff" stroke="#1a1a1a" stroke-width="1.35"/><circle cx="10.5" cy="10.5" r="5.5" fill="#333"/></svg><div class="t lb" style="left:1152px;top:416px">Right</div>
<div class="t lb" style="left:1230px;top:419px">on</div>
<div class="a" style="left:1253px;top:414px;width:40px;height:25px;background:#fff;border:1px solid #c8c8c8"></div>
<div class="t lb" style="left:1257px;top:419px">Title</div>

<!-- h scrollbar -->
<div class="a" style="left:414px;top:840px;width:865px;height:26px;background:#f0f0f0"></div>
<div class="a" style="left:442px;top:841px;width:679px;height:25px;background:#cdcdcd"></div>
<svg class="a" style="left:414px;top:838px" width="30" height="30" viewBox="0 0 30 30"><path d="M13.3 9.2 L17.9 9.2 L13 15.2 L17.9 20.8 L13.3 20.8 L8.1 15.2 Z" fill="#4a4a4a"/></svg>
<svg class="a" style="left:1250px;top:838px" width="30" height="30" viewBox="0 0 30 30"><path d="M15.2 9.2 L10.6 9.2 L15.5 15.2 L10.6 20.8 L15.2 20.8 L20.4 15.2 Z" fill="#4a4a4a"/></svg>

<!-- buttons -->
<div class="btn" style="left:869px">OK</div>
<div class="btn" style="left:1006px">Cancel</div>
<div class="btn dis" style="left:1143px">Apply</div>
<div class="a" style="left:1px;top:866px;width:1278px;height:1px;background:#f8f8f8"></div><div class="a" style="left:1px;top:867px;width:1278px;height:1px;background:#a0a0a0"></div><div class="a" style="left:1px;top:868px;width:1278px;height:1px;background:#f8f8f8"></div>

<div class="a" style="left:0;top:0;width:1280px;height:945px;border:1px solid #444;border-top-color:#353535"></div>
</body></html>
